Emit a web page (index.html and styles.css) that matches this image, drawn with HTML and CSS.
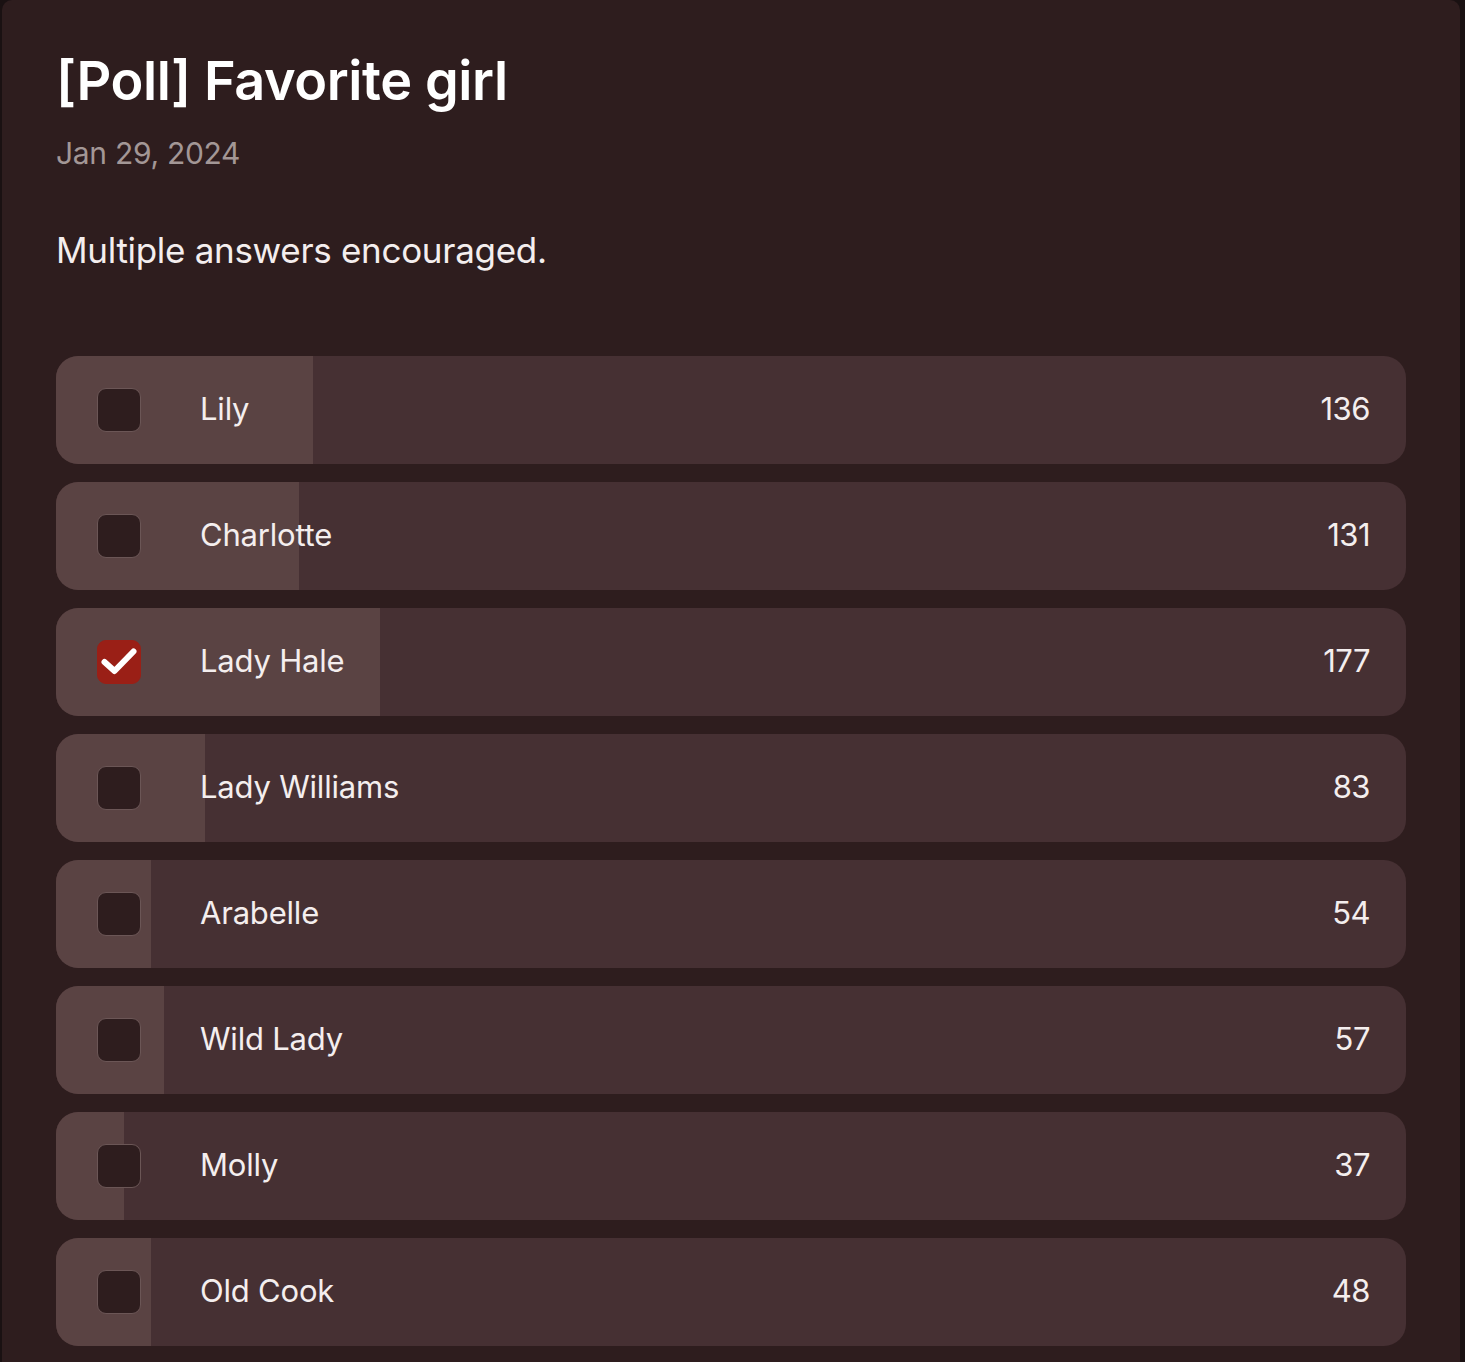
FILE: index.html
```html
<!DOCTYPE html>
<html lang="en">
<head>
<meta charset="utf-8">
<title>[Poll] Favorite girl</title>
<link rel="stylesheet" href="styles.css">
</head>
<body>
<main class="card">
  <h1 class="title">[Poll] Favorite girl</h1>
  <div class="date">Jan 29, 2024</div>
  <p class="desc">Multiple answers encouraged.</p>
  <ul class="poll">
    <li class="option"><span class="fill" style="width:19%"></span><span class="box"></span><span class="label">Lily</span><span class="count">136</span></li>
    <li class="option"><span class="fill" style="width:18%"></span><span class="box"></span><span class="label">Charlotte</span><span class="count">131</span></li>
    <li class="option"><span class="fill" style="width:24%"></span><span class="box checked"><svg viewBox="0 0 44 44" width="44" height="44"><path d="M7.5 22 L17.5 31 L36.5 11.5" fill="none" stroke="#fff" stroke-width="6" stroke-linecap="round" stroke-linejoin="round"/></svg></span><span class="label">Lady Hale</span><span class="count">177</span></li>
    <li class="option"><span class="fill" style="width:11%"></span><span class="box"></span><span class="label">Lady Williams</span><span class="count">83</span></li>
    <li class="option"><span class="fill" style="width:7%"></span><span class="box"></span><span class="label">Arabelle</span><span class="count">54</span></li>
    <li class="option"><span class="fill" style="width:8%"></span><span class="box"></span><span class="label">Wild Lady</span><span class="count">57</span></li>
    <li class="option"><span class="fill" style="width:5%"></span><span class="box"></span><span class="label">Molly</span><span class="count">37</span></li>
    <li class="option"><span class="fill" style="width:7%"></span><span class="box"></span><span class="label">Old Cook</span><span class="count">48</span></li>
  </ul>
</main>
</body>
</html>
```

FILE: styles.css
```css
* { box-sizing: border-box; }
html, body {
  margin: 0;
  padding: 0;
  background: #1a1112;
  height: 100%;
}
body {
  font-family: Inter, "Noto Sans", sans-serif;
  color: #f4eeee;
  overflow: hidden;
}
.card {
  margin-left: 2px;
  width: 1458px;
  min-height: 1362px;
  background: #2e1d1e;
  border-radius: 10px 10px 0 0;
  padding: 48px 54px 0 54px;
}
.title {
  margin: 0;
  font-size: 54px;
  font-weight: 600;
  letter-spacing: -0.4px;
  line-height: 66px;
  color: #ffffff;
}
.date {
  margin-top: 20px;
  font-size: 30px;
  line-height: 38px;
  color: #a39796;
  letter-spacing: -0.3px;
}
.desc {
  margin: 57px 0 0 0;
  font-size: 35px;
  line-height: 42px;
  letter-spacing: -0.3px;
}
.poll {
  list-style: none;
  margin: 85px 0 0 0;
  padding: 0;
  display: flex;
  flex-direction: column;
  gap: 18px;
}
.option {
  position: relative;
  height: 108px;
  border-radius: 22px;
  background: #463033;
  overflow: hidden;
  display: flex;
  align-items: center;
  padding: 0 36px 0 41px;
}
.fill {
  position: absolute;
  left: 0;
  top: 0;
  bottom: 0;
  background: #5a4343;
}
.box {
  position: relative;
  width: 44px;
  height: 44px;
  border-radius: 9px;
  background: #2e1d1e;
  border: 1.5px solid #6b5656;
  flex: none;
}
.box.checked {
  background: #9a1f16;
  border-color: #9a1f16;
}
.box.checked svg {
  position: absolute;
  left: -1.5px;
  top: -1.5px;
}
.label {
  position: relative;
  margin: 0 0 3px 59px;
  font-size: 31px;
  letter-spacing: -0.2px;
  flex: 1;
}
.count {
  position: relative;
  margin-bottom: 3px;
  font-size: 31px;
  letter-spacing: -0.5px;
}
```
